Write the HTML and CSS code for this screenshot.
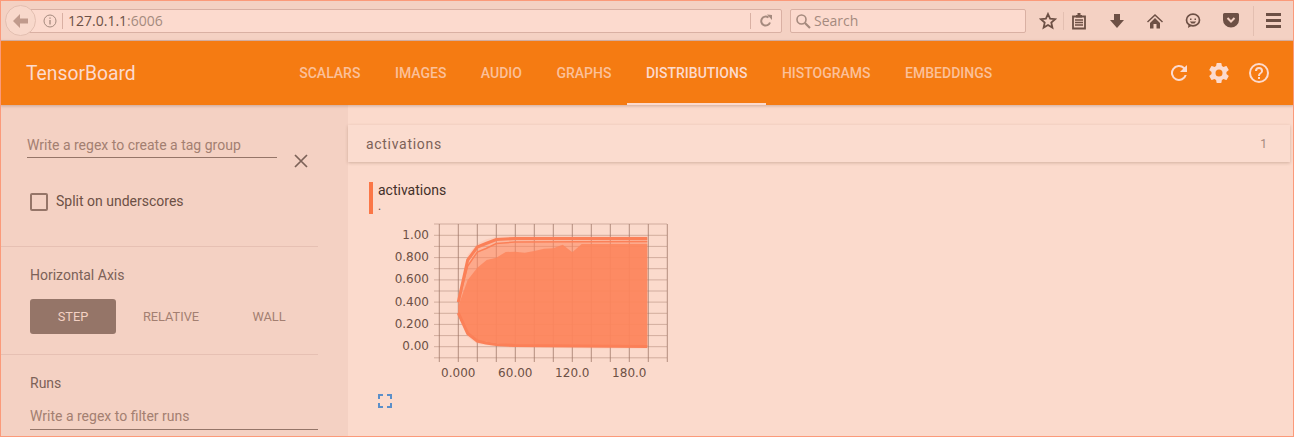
FILE: index.html
```html
<!DOCTYPE html>
<html lang="en">
<head>
    <meta charset="UTF-8">
    <title>TensorBoard</title>
    <link rel="stylesheet" href="styles.css">
</head>
<body>
    <div class="browser-bar">
        <div class="back-btn">
            <svg width="18" height="16" viewBox="0 0 18 16"><path d="M8 1 1 8l7 7V10.500h8v-5H8z" fill="#c09a8c"/></svg>
        </div>
        <div class="url-box">
            <svg class="info-icon" width="14" height="14" viewBox="0 0 14 14"><circle cx="7" cy="7" r="6" fill="none" stroke="#a58a7e" stroke-width="1"/><path d="M7 6v4.500M7 3.500v1.300" stroke="#a58a7e" stroke-width="1.300"/></svg>
            <span class="url-sep"></span>
            <span class="url-text">127.0.1.1<span class="url-port">:6006</span></span>
            <span class="url-end">
                <svg width="14" height="14" viewBox="0 0 14 14"><path d="M11 8.500A4.500 4.500 0 1 1 9.500 3.500" fill="none" stroke="#a58a7e" stroke-width="2"/><path d="M8 .5 13 1v5z" fill="#a58a7e"/></svg>
            </span>
        </div>
        <div class="search-box">
            <svg width="16" height="16" viewBox="0 0 16 16"><circle cx="6.500" cy="6.500" r="4.500" fill="none" stroke="#a58a7e" stroke-width="1.600"/><path d="m10 10 5 5" stroke="#a58a7e" stroke-width="2.200"/></svg>
            <span>Search</span>
        </div>
        <div class="tool-icons">
            <svg class="star" width="18" height="18" viewBox="0 0 18 18"><path d="m9 2 2.100 4.700 5 .5-3.800 3.400 1.100 5L9 13l-4.400 2.600 1.100-5L1.900 7.200l5-.5z" fill="none" stroke="#6d5045" stroke-width="1.800"/></svg>
            <span class="tool-sep"></span>
            <svg class="tool-a" width="16" height="18" viewBox="0 0 16 18"><path d="M2 4.500h12v12H2z" fill="none" stroke="#6d5045" stroke-width="1.800"/><path d="M5 3h6v2.500H5zM6.500 1h3v2h-3z" fill="#6d5045"/><path d="M4 8h8M4 10.500h8M4 13h8" stroke="#6d5045" stroke-width="1.300"/></svg>
            <svg class="tool-b" width="16" height="16" viewBox="0 0 16 16"><path d="M5 1h6v6h4l-7 8-7-8h4z" fill="#6d5045"/></svg>
            <svg class="tool-c" width="18" height="16" viewBox="0 0 18 16"><path d="M9 1 1 8.500l1 1L9 3l7 6.500 1-1zM4 10l5-5 5 5v5.500h-3.500V11h-3v4.500H4z" fill="#6d5045"/></svg>
            <svg class="tool-d" width="16" height="16" viewBox="0 0 16 16"><ellipse cx="8" cy="7" rx="6.500" ry="5.800" fill="none" stroke="#6d5045" stroke-width="1.700"/><path d="M5 5.500h1.500v1.500H5zM9.500 5.500H11v1.500H9.500zM4.800 8.500h6.400L9.500 10.500h-3zM3.500 11.500l-.5 3.500 4-2.500z" fill="#6d5045"/></svg>
            <svg class="tool-e" width="16" height="15" viewBox="0 0 16 15"><path d="M1.500 0h13A1.500 1.500 0 0 1 16 1.500V7A8 7.500 0 0 1 0 7V1.500A1.500 1.500 0 0 1 1.500 0z" fill="#6d5045"/><path d="m4.500 5 3.500 3.500L11.500 5" fill="none" stroke="#f4d1c3" stroke-width="2"/></svg>
            <span class="tool-sep tool-sep-b"></span>
            <span class="hamburger"><i></i><i></i><i></i></span>
        </div>
    </div>

    <header class="app-bar">
        <div class="brand">TensorBoard</div>
        <nav class="tabs">
            <a class="tab">Scalars</a>
            <a class="tab">Images</a>
            <a class="tab">Audio</a>
            <a class="tab">Graphs</a>
            <a class="tab selected">Distributions</a>
            <a class="tab">Histograms</a>
            <a class="tab">Embeddings</a>
        </nav>
        <div class="app-actions">
            <svg width="24" height="24" viewBox="0 0 24 24"><path d="M17.650 6.350A8 8 0 1 0 19.730 14h-2.080a6 6 0 1 1-1.410-6.240L13 11h7V4z" fill="#fcdace"/></svg>
            <svg width="24" height="24" viewBox="0 0 24 24"><path d="M19.430 12.980c.04-.32.07-.64.07-.98s-.03-.66-.07-.98l2.110-1.650a.5.5 0 0 0 .12-.64l-2-3.460a.5.5 0 0 0-.61-.22l-2.490 1a7.300 7.300 0 0 0-1.690-.98l-.38-2.650A.49.49 0 0 0 14 2h-4a.49.49 0 0 0-.49.42l-.38 2.650c-.61.25-1.170.59-1.690.98l-2.490-1a.5.5 0 0 0-.61.22l-2 3.460a.49.49 0 0 0 .12.64l2.110 1.650c-.04.32-.07.65-.07.98s.03.66.07.98l-2.110 1.650a.5.5 0 0 0-.12.64l2 3.460c.12.22.39.3.61.22l2.490-1c.52.4 1.080.73 1.690.98l.38 2.650c.03.24.24.42.49.42h4c.25 0 .46-.18.49-.42l.38-2.650c.61-.25 1.170-.59 1.690-.98l2.490 1c.23.09.49 0 .61-.22l2-3.460a.5.5 0 0 0-.12-.64zM12 15.500a3.500 3.500 0 1 1 0-7 3.500 3.500 0 0 1 0 7z" fill="#fcdace"/></svg>
            <svg width="24" height="24" viewBox="0 0 24 24"><path d="M11 18h2v-2h-2zm1-16a10 10 0 1 0 0 20 10 10 0 0 0 0-20zm0 18a8 8 0 1 1 0-16 8 8 0 0 1 0 16zm0-14a4 4 0 0 0-4 4h2a2 2 0 1 1 4 0c0 2-3 1.750-3 5h2c0-2.250 3-2.500 3-5a4 4 0 0 0-4-4z" fill="#fcdace"/></svg>
        </div>
    </header>

    <div class="content">
        <aside class="sidebar">
            <section class="side-section tags">
                <div class="tag-row">
                    <div class="text-input tag-input">Write a regex to create a tag group</div>
                    <svg class="clear-icon" width="14" height="14" viewBox="0 0 14 14"><path d="m1 1 12 12M13 1 1 13" stroke="#7c6258" stroke-width="1.700"/></svg>
                </div>
                <label class="check-row"><span class="checkbox"></span><span class="check-text">Split on underscores</span></label>
            </section>
            <section class="side-section axis">
                <div class="side-heading">Horizontal Axis</div>
                <div class="axis-buttons">
                    <div class="axis-btn active">Step</div>
                    <div class="axis-btn">Relative</div>
                    <div class="axis-btn">Wall</div>
                </div>
            </section>
            <section class="side-section runs">
                <div class="side-heading">Runs</div>
                <div class="text-input run-input">Write a regex to filter runs</div>
            </section>
        </aside>

        <main class="main">
            <div class="category-head">
                <span class="category-name">activations</span>
                <span class="category-count">1</span>
            </div>
            <div class="chart-card">
                <div class="chart-title">
                    <div class="chart-tag">activations</div>
                    <div class="chart-run">.</div>
                </div>
                <svg class="chart" width="310" height="165" viewBox="370 220 310 165">
                    <path class="grid-h" d="M434 224H667M434 235.300H667M434 246.400H667M434 257.600H667M434 268.700H667M434 279.900H667M434 291H667M434 302.100H667M434 313.300H667M434 324.400H667M434 335.600H667M434 346.700H667M434 357.800H667"/>
                    <path class="grid-v" d="M439.300 224V362M458.300 224V362M477.300 224V362M496.300 224V362M515.300 224V362M534.300 224V362M553.300 224V362M572.300 224V362M591.300 224V362M610.300 224V362M629.300 224V362M648.300 224V362M667.300 224V362"/>
                    <path class="band" d="M458.300 300 467.700 255 477.300 243.500 486 239.500 496.300 236.500 515 235.800 647.300 235.800V348.500H600L515 347.500 496.300 346.500 477.300 344 467.700 337 458.300 315z"/>
                    <path class="band mid" d="M458.300 302 467.700 260 477.300 247 486 243.500 496.300 239.500 515 238.500 647.300 238V347H600L515 346 496.300 344.500 477.300 341.500 467.700 334 458.300 314z"/>
                    <path class="band mid" d="M458.300 302 467.700 266 477.300 252 486 248.500 496.300 243.500 515 242 647.300 241.500V346.500H600L515 345.500 496.300 343.500 477.300 340 467.700 332.500 458.300 314z"/>
                    <path class="band inner" d="M458.300 306 467.700 280 477.300 267.700 486.700 260 496.300 257.700 505.700 252 515.300 251.700 524.700 252.700 534.300 251 544 248.700 553.300 248.300 562.700 244.700 572.300 252.300 581.700 244 647.300 244V346H600L515 345 496.300 343 477.300 340.500 467.700 333.500 458.300 313z"/>
                    <path class="line" d="M458.300 302 467.700 260 477.300 247 486 243.500 496.300 239.500 515 238.500 647.300 238.500"/>
                    <path class="line thin" d="M458.300 302 467.700 266 477.300 252 486 248.500 496.300 243.500 515 242 647.300 241.500"/>
                    <path class="line" d="M458.300 313 467.700 333.500 477.300 341 486 343 496.300 344.500 515 345.500 647.300 346.500"/>
                    <text class="tick" x="429" y="239" text-anchor="end">1.00</text>
                    <text class="tick" x="429" y="261" text-anchor="end">0.800</text>
                    <text class="tick" x="429" y="283" text-anchor="end">0.600</text>
                    <text class="tick" x="429" y="306" text-anchor="end">0.400</text>
                    <text class="tick" x="429" y="328" text-anchor="end">0.200</text>
                    <text class="tick" x="429" y="350" text-anchor="end">0.00</text>
                    <text class="tick" x="458.300" y="377" text-anchor="middle">0.000</text>
                    <text class="tick" x="515.300" y="377" text-anchor="middle">60.00</text>
                    <text class="tick" x="572.300" y="377" text-anchor="middle">120.0</text>
                    <text class="tick" x="629.300" y="377" text-anchor="middle">180.0</text>
                </svg>
                <svg class="expand" width="14" height="14" viewBox="0 0 14 14"><path d="M1 5V1h4M9 1h4v4M13 9v4H9M5 13H1V9" fill="none" stroke="#5b8fc9" stroke-width="2"/></svg>
            </div>
        </main>
    </div>
</body>
</html>
```

FILE: styles.css
```css
* {
    box-sizing: border-box;
}
html, body {
    margin: 0;
    height: 437px;
    overflow: hidden;
}
body {
    border: 1px solid #fb9a7a;
    background: #fbdacc;
    font-family: Roboto, "Liberation Sans", sans-serif;
    font-size: 14px;
    color: #6d5045;
    display: flex;
    flex-direction: column;
}

/* browser toolbar */
.browser-bar {
    height: 40px;
    flex: none;
    background: #f4d1c3;
    border-bottom: 1px solid #d8b3a6;
    display: flex;
    align-items: center;
    padding-left: 19px;
    position: relative;
}
.back-btn {
    position: absolute;
    left: 4px;
    top: 4px;
    width: 31px;
    height: 31px;
    border-radius: 50%;
    background: #f8d8cb;
    border: 1px solid #e3bfb1;
    display: flex;
    align-items: center;
    justify-content: center;
    z-index: 1;
}
.url-box {
    width: 762px;
    height: 24px;
    background: #fcdace;
    border: 1px solid #d9b0a3;
    border-radius: 2px;
    display: flex;
    align-items: center;
    padding-left: 22px;
}
.url-sep {
    width: 1px;
    height: 16px;
    background: #d9b0a3;
    margin: 0 5px 0 5px;
}
.url-text {
    font-family: "Open Sans", "Noto Sans", sans-serif;
    font-size: 14px;
    color: #6d5045;
}
.url-port {
    color: #a58a7e;
}
.url-end {
    margin-left: auto;
    width: 31px;
    height: 16px;
    border-left: 1px solid #d9b0a3;
    display: flex;
    align-items: center;
    justify-content: center;
}
.search-box {
    width: 236px;
    height: 24px;
    margin-left: 8px;
    background: #fcdace;
    border: 1px solid #d9b0a3;
    border-radius: 2px;
    display: flex;
    align-items: center;
    gap: 3px;
    padding-left: 4px;
    font-family: "Open Sans", "Noto Sans", sans-serif;
    font-size: 14px;
    color: #a58a7e;
}
.tool-icons {
    display: flex;
    align-items: center;
    margin-left: 13px;
    flex: 1;
}
.tool-sep {
    width: 1px;
    height: 18px;
    background: #e3bfb1;
    margin: 0 7px 0 6px;
}
.tool-sep-b {
    height: 30px;
    margin: 0 12px 0 14px;
}
.tool-b {
    margin-left: 22px;
}
.tool-c {
    margin-left: 21px;
}
.tool-d {
    margin-left: 20.500px;
}
.tool-e {
    margin-left: 22.500px;
}
.hamburger {
    display: flex;
    flex-direction: column;
    gap: 3px;
}
.hamburger i {
    display: block;
    width: 15px;
    height: 3px;
    background: #6d5045;
}

/* orange app bar */
.app-bar {
    height: 64px;
    flex: none;
    margin: 0 -1px;
    background: #f57b12;
    display: flex;
    align-items: center;
    box-shadow: 0 1px 3px rgba(120, 80, 60, 0.35);
    position: relative;
    z-index: 2;
}
.brand {
    width: 282px;
    padding-left: 26px;
    font-size: 19.300px;
    color: #fcdace;
}
.tabs {
    display: flex;
    align-self: stretch;
}
.tab {
    padding: 0 17.250px;
    display: flex;
    align-items: center;
    font-weight: 500;
    text-transform: uppercase;
    color: #fbc09a;
    position: relative;
}
.tab.selected {
    color: #fcdace;
}
.tab.selected::after {
    content: "";
    position: absolute;
    left: -2px;
    right: -1px;
    bottom: 0;
    height: 2px;
    background: #fcdace;
}
.app-actions {
    margin-left: auto;
    display: flex;
    align-items: center;
    gap: 16px;
    padding-right: 23px;
}

/* page body */
.content {
    flex: 1;
    display: flex;
    min-height: 0;
}
.sidebar {
    width: 347px;
    flex: none;
    background: #f4d1c3;
    padding-right: 30px;
}
.side-section {
    border-bottom: 1px solid #e6c0b3;
}
.side-section.runs {
    border-bottom: none;
}
.tags {
    padding: 30px 0 35px 26px;
}
.axis {
    padding: 18px 0 20px 29px;
}
.runs {
    padding: 18px 0 0 29px;
}
.text-input {
    line-height: 20px;
    padding-bottom: 2px;
    color: #a37f71;
    border-bottom: 1px solid #957568;
}
.tag-row {
    display: flex;
    align-items: flex-end;
}
.tag-input {
    width: 250px;
}
.clear-icon {
    margin: 0 0 -10px 17px;
}
.check-row {
    display: flex;
    align-items: center;
    height: 18px;
    margin: 35px 0 0 3px;
    gap: 8px;
    color: #6d5045;
}
.check-text {
    margin-top: -2px;
}
.checkbox {
    width: 18px;
    height: 18px;
    border: 2px solid #957568;
    border-radius: 2px;
}
.side-heading {
    line-height: 20px;
    color: #7c6258;
}
.axis-buttons {
    display: flex;
    gap: 12px;
    margin-top: 14px;
}
.axis-btn {
    width: 86px;
    height: 35px;
    display: flex;
    align-items: center;
    justify-content: center;
    border-radius: 3px;
    font-size: 12.800px;
    text-transform: uppercase;
    color: #a37f71;
}
.axis-btn.active {
    background: #957568;
    color: #f4d1c3;
}
.run-input {
    margin-top: 13px;
    padding-bottom: 3px;
}

/* main column */
.main {
    flex: 1;
    padding: 20px 3px 0 0;
}
.category-head {
    height: 37px;
    display: flex;
    align-items: center;
    justify-content: space-between;
    padding: 0 23px 0 18px;
    background: #fbdccf;
    box-shadow: 0 1px 3px rgba(120, 80, 60, 0.3);
}
.category-name {
    font-size: 14px;
    letter-spacing: 0.7px;
    color: #7c6258;
}
.category-count {
    font-size: 12px;
    color: #a58a7e;
}
.chart-card {
    display: flex;
    flex-direction: column;
    padding-top: 20px;
}
.chart-title {
    margin-left: 21px;
    height: 32px;
    padding-left: 5px;
    border-left: 4px solid #fb7646;
}
.chart-tag {
    line-height: 16px;
    color: #43302a;
}
.chart-run {
    font-size: 12px;
    line-height: 16px;
    color: #6d5045;
}
.chart {
    display: block;
    margin: 6px 0 0 22px;
}
.grid-h {
    fill: none;
    stroke: #b08878;
    stroke-opacity: 0.55;
    stroke-width: 1;
}
.grid-v {
    fill: none;
    stroke: #9c7466;
    stroke-opacity: 0.75;
    stroke-width: 1;
}
.band {
    fill: #ff8a60;
    fill-opacity: 0.14;
}
.band.mid {
    fill-opacity: 0.32;
}
.band.inner {
    fill: #fd855c;
    fill-opacity: 0.85;
}
.line {
    fill: none;
    stroke: #fb8058;
    stroke-width: 3;
}
.line.thin {
    stroke-width: 1.500;
}
.tick {
    font-family: "DejaVu Sans", sans-serif;
    font-size: 12px;
    fill: #6d5045;
}
.expand {
    margin: 9px 0 0 30px;
}
```
